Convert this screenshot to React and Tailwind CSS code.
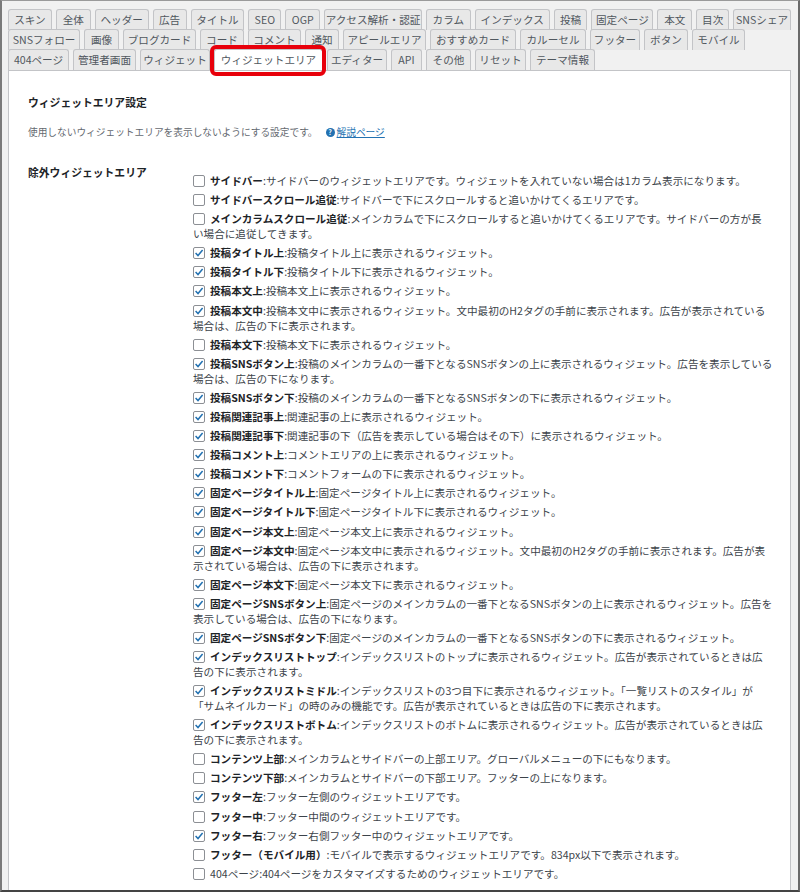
import React from 'react';

const tabRows = [
  [
    ['スキン', 'w-[44px]'], ['全体', 'w-[35px]'], ['ヘッダー', 'w-[54px]'], ['広告', 'w-[34px]'],
    ['タイトル', 'w-[54px]'], ['SEO', 'w-[33px]'], ['OGP', 'w-[35px]'], ['アクセス解析・認証', 'w-[98px]'],
    ['カラム', 'w-[45px]'], ['インデックス', 'w-[75px]'], ['投稿', 'w-[34px]'], ['固定ページ', 'w-[62px]'],
    ['本文', 'w-[35px]'], ['目次', 'w-[33px]'], ['SNSシェア', 'w-[58px]'],
  ],
  [
    ['SNSフォロー', 'w-[72px]'], ['画像', 'w-[35px]'], ['ブログカード', 'w-[73px]'], ['コード', 'w-[44px]'],
    ['コメント', 'w-[53px]'], ['通知', 'w-[34px]'], ['アピールエリア', 'w-[83px]'], ['おすすめカード', 'w-[86px]'],
    ['カルーセル', 'w-[66px]'], ['フッター', 'w-[50px]'], ['ボタン', 'w-[44px]'], ['モバイル', 'w-[53px]'],
  ],
  [
    ['404ページ', 'w-[61px]'], ['管理者画面', 'w-[63px]'], ['ウィジェット', 'w-[70px]'], ['ウィジェットエリア', 'w-[109px]', true],
    ['エディター', 'w-[60px]'], ['API', 'w-[31px]'], ['その他', 'w-[45px]'], ['リセット', 'w-[51px]'], ['テーマ情報', 'w-[65px]'],
  ],
];

// second line (after the break) mirrors how the settings page wraps at this width
const items = [
  [false, 'サイドバー', ['サイドバーのウィジェットエリアです。ウィジェットを入れていない場合は1カラム表示になります。']],
  [false, 'サイドバースクロール追従', ['サイドバーで下にスクロールすると追いかけてくるエリアです。']],
  [false, 'メインカラムスクロール追従', ['メインカラムで下にスクロールすると追いかけてくるエリアです。サイドバーの方が長', 'い場合に追従してきます。']],
  [true, '投稿タイトル上', ['投稿タイトル上に表示されるウィジェット。']],
  [true, '投稿タイトル下', ['投稿タイトル下に表示されるウィジェット。']],
  [true, '投稿本文上', ['投稿本文上に表示されるウィジェット。']],
  [true, '投稿本文中', ['投稿本文中に表示されるウィジェット。文中最初のH2タグの手前に表示されます。広告が表示されている', '場合は、広告の下に表示されます。']],
  [false, '投稿本文下', ['投稿本文下に表示されるウィジェット。']],
  [true, '投稿SNSボタン上', ['投稿のメインカラムの一番下となるSNSボタンの上に表示されるウィジェット。広告を表示している', '場合は、広告の下になります。']],
  [true, '投稿SNSボタン下', ['投稿のメインカラムの一番下となるSNSボタンの下に表示されるウィジェット。']],
  [true, '投稿関連記事上', ['関連記事の上に表示されるウィジェット。']],
  [true, '投稿関連記事下', ['関連記事の下（広告を表示している場合はその下）に表示されるウィジェット。']],
  [true, '投稿コメント上', ['コメントエリアの上に表示されるウィジェット。']],
  [true, '投稿コメント下', ['コメントフォームの下に表示されるウィジェット。']],
  [true, '固定ページタイトル上', ['固定ページタイトル上に表示されるウィジェット。']],
  [true, '固定ページタイトル下', ['固定ページタイトル下に表示されるウィジェット。']],
  [true, '固定ページ本文上', ['固定ページ本文上に表示されるウィジェット。']],
  [true, '固定ページ本文中', ['固定ページ本文中に表示されるウィジェット。文中最初のH2タグの手前に表示されます。広告が表', '示されている場合は、広告の下に表示されます。']],
  [true, '固定ページ本文下', ['固定ページ本文下に表示されるウィジェット。']],
  [true, '固定ページSNSボタン上', ['固定ページのメインカラムの一番下となるSNSボタンの上に表示されるウィジェット。広告を', '表示している場合は、広告の下になります。']],
  [true, '固定ページSNSボタン下', ['固定ページのメインカラムの一番下となるSNSボタンの下に表示されるウィジェット。']],
  [true, 'インデックスリストトップ', ['インデックスリストのトップに表示されるウィジェット。広告が表示されているときは広', '告の下に表示されます。']],
  [true, 'インデックスリストミドル', ['インデックスリストの3つ目下に表示されるウィジェット。「一覧リストのスタイル」が', '「サムネイルカード」の時のみの機能です。広告が表示されているときは広告の下に表示されます。']],
  [true, 'インデックスリストボトム', ['インデックスリストのボトムに表示されるウィジェット。広告が表示されているときは広', '告の下に表示されます。']],
  [false, 'コンテンツ上部', ['メインカラムとサイドバーの上部エリア。グローバルメニューの下にもなります。']],
  [false, 'コンテンツ下部', ['メインカラムとサイドバーの下部エリア。フッターの上になります。']],
  [true, 'フッター左', ['フッター左側のウィジェットエリアです。']],
  [false, 'フッター中', ['フッター中間のウィジェットエリアです。']],
  [true, 'フッター右', ['フッター右側フッター中のウィジェットエリアです。']],
  [false, 'フッター（モバイル用）', ['モバイルで表示するウィジェットエリアです。834px以下で表示されます。']],
  [false, '404ページ', ['404ページをカスタマイズするためのウィジェットエリアです。'], true],
];

const Box = ({ checked }) => (
  <span className="relative inline-block w-[12px] h-[12px] mr-[5px] align-[-2px] bg-white border border-[#8c8f94] rounded-[2px]">
    {checked && (
      <svg viewBox="0 0 12 12" className="absolute -left-px -top-px w-[12px] h-[12px]">
        <path d="M2.6 6.1 L5 8.6 L9.6 3" fill="none" stroke="#2271b1" strokeWidth="1.5" />
      </svg>
    )}
  </span>
);

const Tab = ({ label, w, active }) => (
  <div
    className={
      'relative h-[21px] flex items-center justify-center rounded-t-[3px] border border-b-0 border-[#c3c4c7] text-[10.6px] text-[#50575e] ' +
      w +
      (active ? ' bg-white z-10' : ' bg-[#e8e8e8]')
    }
  >
    {label}
    {active && <span className="absolute -left-[5px] -right-[4px] -top-[5px] -bottom-[6px] border-[4px] border-[#e8000b] rounded-[6px]" />}
  </div>
);

export default function App() {
  return (
    <div className="w-[800px] h-[892px] overflow-hidden bg-[#f1f1f1] border-t border-t-[#9a9a9a] border-l-2 border-l-[#7a7a7a] border-r-2 border-r-[#6a6a6a] border-b-2 border-b-[#444] pl-[6px] pr-[7px] pt-[8px] font-['Noto_Sans_CJK_JP','Noto_Sans',sans-serif]">
      <div className="flex flex-col">
        {tabRows.map((row, i) => (
          <div key={i} className={'flex gap-[4px] ' + (i > 0 ? '-mt-px' : '')}>
            {row.map(([label, w, active]) => (
              <Tab key={label} label={label} w={w} active={active} />
            ))}
          </div>
        ))}
      </div>
      <div className="bg-white border border-[#c3c4c7] h-[900px] pl-[19px] pr-[10px] pt-[24px]">
        <div className="text-[10.8px] leading-[15px] font-bold text-[#1d2327]">ウィジェットエリア設定</div>
        <div className="mt-[15px] flex items-center text-[9.7px] leading-[15px] text-[#646970]">
          使用しないウィジェットエリアを表示しないようにする設定です。
          <span className="ml-[8px] mr-[2px] w-[9px] h-[9px] rounded-full bg-[#2271b1] text-white text-[7px] leading-[9px] font-bold flex items-center justify-center">?</span>
          <span className="text-[#2271b1] underline">解説ページ</span>
        </div>
        <div className="mt-[25px] flex">
          <div className="w-[165px] shrink-0 text-[10.8px] leading-[15px] font-bold text-[#1d2327]">除外ウィジェットエリア</div>
          <div className="pt-[8px] flex-1 flex flex-col gap-[4.1px] text-[10.6px] leading-[15px] text-[#3c434a] whitespace-nowrap">
            {items.map(([checked, name, lines, plain]) => (
              <div key={name}>
                <Box checked={checked} />
                <span className={plain ? '' : 'font-bold text-[#1d2327]'}>{name}</span>:{lines[0]}
                {lines[1] && (
                  <>
                    <br />
                    {lines[1]}
                  </>
                )}
              </div>
            ))}
          </div>
        </div>
      </div>
    </div>
  );
}
